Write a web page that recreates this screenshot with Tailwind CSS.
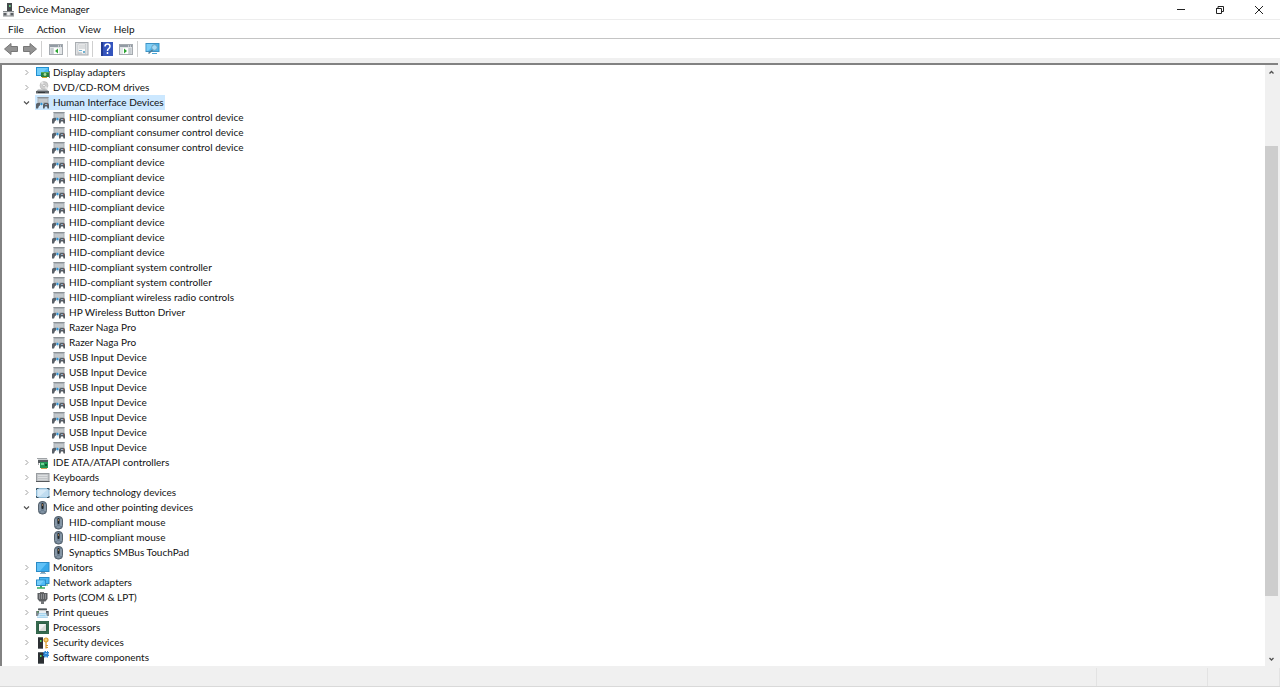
<!DOCTYPE html>
<html lang="en">
<head>
    <meta charset="UTF-8">
    <meta name="viewport" content="width=device-width, initial-scale=1.0">
    <script src="https://cdn.jsdelivr.net/npm/@tailwindcss/browser@4"></script>
    <title>Device Manager</title>
</head>
<body class="flex flex-col h-screen overflow-hidden bg-[#f0f0f0] font-['Lato','Open_Sans',sans-serif] text-[10px] leading-[15px] text-[#111]">

    <!-- icons, all on a 14x14 grid -->
    <svg class="hidden">
        <symbol id="chevron-right" viewBox="0 0 9 9"><path d="M3.500 2 6 4.500 3.500 7" fill="none" stroke="#a0a0a0"/></symbol>
        <symbol id="chevron-down" viewBox="0 0 9 9"><path d="M2 3.500 4.500 6 7 3.500" fill="none" stroke="#505050" stroke-width="1.200"/></symbol>
        <symbol id="app" viewBox="0 0 14 14">
            <rect x="5" y="0" width="5" height="8" fill="#45494c"/><rect x="7" y="2" width="1.600" height="2" fill="#6fd08a"/>
            <path d="M1 8h11v5H1z" fill="#d3d5d7"/><path d="M1 8.500h11" stroke="#85898c"/>
            <path d="M1.500 10h3v2.500h-3zM8.500 10h3v2.500h-3z" fill="#5b5f63"/><path d="M5.500 9h2v4h-2z" fill="#f4f4f4"/><path d="M1 13h11" stroke="#85898c"/>
        </symbol>
        <symbol id="display" viewBox="0 0 14 14">
            <rect x="0" y="1" width="13" height="9" fill="#218fd0"/><rect x="1" y="2" width="11" height="7" fill="#48b6f0"/>
            <path d="M1 2h11L4 9H1z" fill="#70cdfa"/>
            <rect x="5" y="6" width="8" height="5" fill="#28803d"/><rect x="5" y="6" width="8" height="1" fill="#58aa58"/><circle cx="9" cy="8.500" r="1.400" fill="#a8dca0"/>
            <path d="M13.500 5v7" stroke="#7c8388"/><path d="M6 11.500h5" stroke="#d4a52e"/>
        </symbol>
        <symbol id="disc" viewBox="0 0 14 14">
            <circle cx="8" cy="4.500" r="4" fill="#cfcfcf" stroke="#aaa" stroke-width=".5"/><path d="M8 4.500 4.500 2A4 4 0 0 1 7 .500zM8 4.500l4 2a4 4 0 0 1-2 2z" fill="#e8e8e8"/><circle cx="8" cy="4.500" r="1.200" fill="#fff" stroke="#999" stroke-width=".5"/>
            <path d="M2 8.500h9l2 2H0z" fill="#a4a7aa"/><path d="M0 10h13v2.500H0z" fill="#5f6468"/><path d="M2 11.500h7" stroke="#34383b"/>
        </symbol>
        <symbol id="hid" viewBox="0 0 14 14">
            <path d="M1.500 1h11v8h-11z" fill="#a9afb4"/><path d="M2.500 3h9v3h-9z" fill="#c3c8cc"/><path d="M1.500 1.500h11" stroke="#8b9196"/>
            <path d="M0 12.500V8.500Q0 7 1.500 7H4v2.500l-1 .500-1 2.500z" fill="#596068"/>
            <path d="M4.500 6.500h3v4h-3z" fill="#d9e6ef"/><path d="M4 8 5.500 6.500 7 8 5.500 9.500z" fill="#2f93d6"/>
            <path d="M7 12.500V9q0-2 2-2h2.500Q13 7 13 9v3.500h-1.500L11 10.500H9l-.500 2z" fill="#565d64"/><path d="M9 8.500h2" stroke="#8fb4cd"/><path d="M11 8h1v1h-1z" fill="#b0574c"/>
        </symbol>
        <symbol id="ide" viewBox="0 0 14 14">
            <path d="M1 2h10l1.500 3H3z" fill="#cfd2d4"/><path d="M1 2h10v1H1z" fill="#9fa3a6"/><path d="M2 4h10v3H2z" fill="#555b5f"/>
            <path d="M4 6h8v6H4z" fill="#239654"/><path d="M5 7h3v2H5z" fill="#74d49b"/><path d="M9 8h2v2H9z" fill="#0a5730"/><path d="M5 12.500h6" stroke="#c8a24c"/><path d="M2.500 7v2" stroke="#a5a9ac"/>
        </symbol>
        <symbol id="keyboard" viewBox="0 0 14 14">
            <rect x=".5" y="2.500" width="12.500" height="8" fill="#c2c5c8" stroke="#989ca0"/><path d="M0 10.500h13.500" stroke="#55595d"/>
            <path d="M2 4.500h9.500M2 6.500h9.500" stroke="#dcdfe1"/><path d="M2 8.500h9.500" stroke="#d2d5d7"/>
        </symbol>
        <symbol id="memory" viewBox="0 0 14 14">
            <rect x=".5" y="2.500" width="12.500" height="9" fill="#bfdcf0" stroke="#8db8d4"/><path d="M2 4h9L4 10H2z" fill="#d6eaf7"/>
            <path d="M.5 4V2.500h2M11 2.500h2V4M13 10v1.500h-2M2.500 11.500h-2V10" fill="none" stroke="#3c5261"/>
        </symbol>
        <symbol id="mouse" viewBox="0 0 14 14">
            <rect x="2.500" y=".5" width="8" height="12.500" rx="3.500" fill="#6d8092" stroke="#56626d"/><path d="M4 3v7M9 3v7" stroke="#9dabb8"/>
            <rect x="5.500" y="2" width="2" height="6" rx="1" fill="#1e2225"/><path d="M6.500 3v2" stroke="#c8935c" stroke-width=".7"/><path d="M5 11h3" stroke="#93a2b0"/>
        </symbol>
        <symbol id="monitor" viewBox="0 0 14 14">
            <rect x=".5" y="1.500" width="12.500" height="9" fill="#37a8ea" stroke="#2a8ac5"/><path d="M1 2h10L4 10H1z" fill="#5fc1f7"/><path d="M5 11h4v1H5z" fill="#8b9da9"/><path d="M4 12.500h6" stroke="#8db9d3"/>
        </symbol>
        <symbol id="network" viewBox="0 0 14 14">
            <rect x="3.500" y="1.500" width="9.500" height="6" fill="#48b7f3" stroke="#2a8ac5"/><rect x=".5" y="4" width="9" height="5.500" fill="#4fbcf5" stroke="#2a8ac5"/><path d="M1 4.500h7L4 9H1z" fill="#76cdfa"/>
            <path d="M4 10h2v2H4z" fill="#3fa364"/><path d="M1 12h8" stroke="#38ad5e" stroke-width="1.500"/><path d="M11 8v2" stroke="#2f9654"/>
        </symbol>
        <symbol id="port" viewBox="0 0 14 14">
            <path d="M4 1h4v1H4z" fill="#777"/><path d="M1.500 2h10v6l-2 2.500h-6L1.500 8z" fill="#5c5f62"/><path d="M3.500 3v5M5.500 3v5M7.500 3v5M9.500 3v5" stroke="#9a9d9f" stroke-width=".8"/><path d="M5 10h3v3H5z" fill="#737679"/>
        </symbol>
        <symbol id="printer" viewBox="0 0 14 14">
            <path d="M3 2h7l1 3H2z" fill="#c9ccce"/><path d="M2 2.500h9v1.500H2z" fill="#53585c"/><path d="M0 5h13v5H0z" fill="#83898e"/><path d="M1 5h11v1.500H1z" fill="#4b5156"/>
            <path d="M3 5h7v3H3z" fill="#e8eef2"/><path d="M3 7.500h7l1.500 4h-10z" fill="#f4fafd" stroke="#7ebde3" stroke-width=".6"/><path d="M3.500 8.500h6l.5 2H3z" fill="#9ed4f2"/><path d="M1 6h1.500" stroke="#6dd27b"/>
        </symbol>
        <symbol id="cpu" viewBox="0 0 14 14">
            <rect x="0" y="0" width="13" height="13" fill="#2d6047"/><rect x="1" y="1" width="11" height="11" fill="none" stroke="#4b7d60" stroke-width=".6"/><rect x="3" y="3" width="7" height="7" fill="#d8dbd8"/><path d="M3 3h7l-7 7z" fill="#f1f2f1"/>
        </symbol>
        <symbol id="security" viewBox="0 0 14 14">
            <path d="M2 1h5v12H2z" fill="#2c3033"/><path d="M2 1.500h5" stroke="#60666a"/><path d="M4 4h1.500v2H4z" fill="#5ed35c"/><path d="M2 12.500h5" stroke="#6c7276"/>
            <circle cx="10" cy="4" r="2" fill="#f4d27a" stroke="#d99a2b" stroke-width="1.200"/><path d="M10 6v6.500M10.500 9.500h1.500M10.500 11.500h1.500" stroke="#d99a2b" stroke-width="1.200"/>
        </symbol>
        <symbol id="software" viewBox="0 0 14 14">
            <path d="M2 1h6v12H2z" fill="#2c3033"/><path d="M2 1.500h6" stroke="#60666a"/><path d="M4 4h1.500v2H4z" fill="#5ed35c"/><path d="M2 12.500h6" stroke="#6c7276"/>
            <path d="M7 1h1.500V0H10v1h1V0h1v1h1v1.500h-1v1h1V5h-1v1.500h-1.500v-1h-1v1H8V5H7V3.500h1v-1H7z" fill="#2d86d3"/><path d="M9 2.500h2" stroke="#7bbcf0"/>
        </symbol>
    </svg>

    <header class="flex items-center h-[19px] bg-white">
        <svg class="ml-[2px] size-[14px]"><use href="#app"/></svg>
        <h1 class="ml-[2px] flex-1">Device Manager</h1>
        <button aria-label="Minimize" class="flex w-[39px] justify-center"><svg class="size-[10px]" viewBox="0 0 10 10"><path d="M1 4.500h8" stroke="#222"/></svg></button>
        <button aria-label="Restore" class="flex w-[39px] justify-center"><svg class="size-[10px]" viewBox="0 0 10 10"><path d="M1 3.500h5.500v5H1.500v-5M3 3V1.500h5.500v5H7" fill="none" stroke="#222"/></svg></button>
        <button aria-label="Close" class="flex w-[40px] mr-[1px] justify-center"><svg class="size-[10px]" viewBox="0 0 10 10"><path d="M1 1l8 8M9 1 1 9" stroke="#222"/></svg></button>
    </header>

    <nav class="flex items-center gap-[13px] h-5 border-t border-b border-t-[#ededed] border-b-[#c4c4c4] bg-white pl-2">
        <button>File</button>
        <button>Action</button>
        <button>View</button>
        <button>Help</button>
    </nav>

    <div class="flex items-center h-[19px] bg-white pl-1">
        <button aria-label="Back"><svg class="size-[14px]" viewBox="0 0 14 14"><path d="M.5 7 7 1.500V4.500h6.500v5H7v3z" fill="#939393" stroke="#777"/></svg></button>
        <button aria-label="Forward" class="ml-[5px]"><svg class="size-[14px]" viewBox="0 0 14 14"><path d="M13.500 7 7 1.500V4.500H.5v5H7v3z" fill="#939393" stroke="#777"/></svg></button>
        <span class="ml-1 h-4 w-px bg-[#cfcfcf]"></span>
        <button aria-label="Show/Hide Console Tree" class="ml-[7px]"><svg class="size-[14px]" viewBox="0 0 14 14"><rect x=".5" y="2.500" width="13" height="10" fill="#e3e6e8" stroke="#a5aaaf"/><path d="M1 3h12v2H1z" fill="#929ba4"/><path d="M9 4h1M11 4h1" stroke="#fff"/><path d="M1.500 7h3M1.500 9h3M1.500 11h3" stroke="#a9b1b8"/><path d="M5 6h5v6H5z" fill="#fff"/><path d="M9 6.500v5L6 9z" fill="#2ca432"/></svg></button>
        <span class="ml-1 h-4 w-px bg-[#cfcfcf]"></span>
        <button aria-label="Properties" class="ml-[7px]"><svg class="size-[14px]" viewBox="0 0 14 14"><rect x=".5" y=".5" width="12.500" height="12.500" fill="#dfe2e4" stroke="#a9adb1"/><path d="M3 2h7.500v10H3z" fill="#fafafa" stroke="#b5babd" stroke-width=".6"/><path d="M4 4h6M4 6h6" stroke="#bcc1c4"/><path d="M4 8h3v1H4zM8 9h2v2H8z" fill="#6fb2d2"/><path d="M3 11h4" stroke="#acb0b4"/></svg></button>
        <span class="ml-[3px] h-4 w-px bg-[#cfcfcf]"></span>
        <button aria-label="Help" class="ml-[7px]"><svg class="size-[14px]" viewBox="0 0 14 14"><rect x="1" y="0" width="12" height="14" fill="#3454bd"/><path d="M1 0h2v14H1z" fill="#223a90"/><path d="M5 4.500q0-2.500 2.500-2.500T10 4.300Q10 6 8.500 6.800 7.500 7.400 7.500 9M7.500 10v2" fill="none" stroke="#fff" stroke-width="1.500"/></svg></button>
        <button aria-label="Show/Hide Action Pane" class="ml-[5px]"><svg class="size-[14px]" viewBox="0 0 14 14"><rect x=".5" y="2.500" width="13" height="10" fill="#e3e6e8" stroke="#a5aaaf"/><path d="M1 3h12v2H1z" fill="#929ba4"/><path d="M9 4h1M11 4h1" stroke="#fff"/><path d="M9.500 7h3M9.500 9h3M9.500 11h3" stroke="#a9b1b8"/><path d="M4 6h5v6H4z" fill="#fff"/><path d="M5 6.500v5L8 9z" fill="#2ca432"/></svg></button>
        <span class="ml-1 h-4 w-px bg-[#cfcfcf]"></span>
        <button aria-label="Scan for hardware changes" class="ml-[7px]"><svg class="size-[15px]" viewBox="0 0 15 15"><rect x="1" y="2.500" width="13" height="8" fill="#4db5ea" stroke="#3d92c4"/><path d="M1.500 3H10L3 10H1.500z" fill="#7dcef7"/><circle cx="9.500" cy="6.500" r="2.800" fill="#a4daf6" stroke="#6ba1bf"/><path d="M7.500 9 3.500 12.500" stroke="#557b93" stroke-width="1.500"/><path d="M7 12.500h5" stroke="#4ba4d4"/></svg></button>
    </div>

    <main class="flex flex-1 min-h-0 mt-[5px] mr-[2px] border-t-2 border-l-2 border-[#828282] bg-white">
        <ul id="tree" role="tree" class="flex-1 overflow-hidden"></ul>
        <div class="flex flex-col w-[13px] bg-[#f0f0f0]">
            <button aria-label="Scroll up" class="flex h-[14px] items-center justify-center"><svg class="size-[9px]" viewBox="0 0 9 9"><path d="M2.500 5.500 4.500 3.500 6.500 5.500" fill="none" stroke="#505050" stroke-width="1.300"/></svg></button>
            <div class="grow-[67]"></div>
            <div class="grow-[450] bg-[#cdcdcd]"></div>
            <div class="grow-[56]"></div>
            <button aria-label="Scroll down" class="flex h-[14px] items-center justify-center"><svg class="size-[9px]" viewBox="0 0 9 9"><path d="M2.500 3 4.500 5 6.500 3" fill="none" stroke="#505050" stroke-width="1.300"/></svg></button>
        </div>
    </main>

    <footer class="flex h-[21px] pt-[2px] border-b border-[#d9d9d9]">
        <div class="flex-1 border-r border-[#e3e3e3]"></div>
        <div class="w-[111px] border-r border-[#e3e3e3]"></div>
        <div class="w-[72px] border-r border-[#e3e3e3]"></div>
    </footer>

    <script>
        const tree = document.getElementById('tree');
        const devices = [
            { name: 'Display adapters', icon: 'display' },
            { name: 'DVD/CD-ROM drives', icon: 'disc' },
            { name: 'Human Interface Devices', icon: 'hid', selected: true, items: [
                'HID-compliant consumer control device',
                'HID-compliant consumer control device',
                'HID-compliant consumer control device',
                'HID-compliant device',
                'HID-compliant device',
                'HID-compliant device',
                'HID-compliant device',
                'HID-compliant device',
                'HID-compliant device',
                'HID-compliant device',
                'HID-compliant system controller',
                'HID-compliant system controller',
                'HID-compliant wireless radio controls',
                'HP Wireless Button Driver',
                'Razer Naga Pro',
                'Razer Naga Pro',
                'USB Input Device',
                'USB Input Device',
                'USB Input Device',
                'USB Input Device',
                'USB Input Device',
                'USB Input Device',
                'USB Input Device',
            ] },
            { name: 'IDE ATA/ATAPI controllers', icon: 'ide' },
            { name: 'Keyboards', icon: 'keyboard' },
            { name: 'Memory technology devices', icon: 'memory' },
            { name: 'Mice and other pointing devices', icon: 'mouse', items: [
                'HID-compliant mouse',
                'HID-compliant mouse',
                'Synaptics SMBus TouchPad',
            ] },
            { name: 'Monitors', icon: 'monitor' },
            { name: 'Network adapters', icon: 'network' },
            { name: 'Ports (COM & LPT)', icon: 'port' },
            { name: 'Print queues', icon: 'printer' },
            { name: 'Processors', icon: 'cpu' },
            { name: 'Security devices', icon: 'security' },
            { name: 'Software components', icon: 'software' },
        ];

        const label = (icon, name, selected) =>
            `<span class="flex items-center gap-[3px] h-[15px] px-px ${selected ? 'bg-[#cce8ff]' : ''}">
                <svg class="size-[14px]"><use href="#${icon}"/></svg>
                <span class="whitespace-nowrap">${name.replace('&', '&amp;')}</span>
            </span>`;

        for (const d of devices) {
            const open = !!d.items;
            let html = `<li role="treeitem" aria-expanded="${open}">
                <div class="flex items-center h-[15px] pl-5">
                    <button aria-label="Toggle ${d.name.replace('&', '&amp;')}" class="mr-1"><svg class="size-[9px]"><use href="${open ? '#chevron-down' : '#chevron-right'}"/></svg></button>
                    ${label(d.icon, d.name, d.selected)}
                </div>`;
            if (open) {
                html += `<ul role="group">` + d.items.map(name =>
                    `<li role="treeitem" class="flex h-[15px] pl-[49px]">${label(d.icon, name)}</li>`).join('') + `</ul>`;
            }
            tree.innerHTML += html + `</li>`;
        }
    </script>
</body>
</html>
